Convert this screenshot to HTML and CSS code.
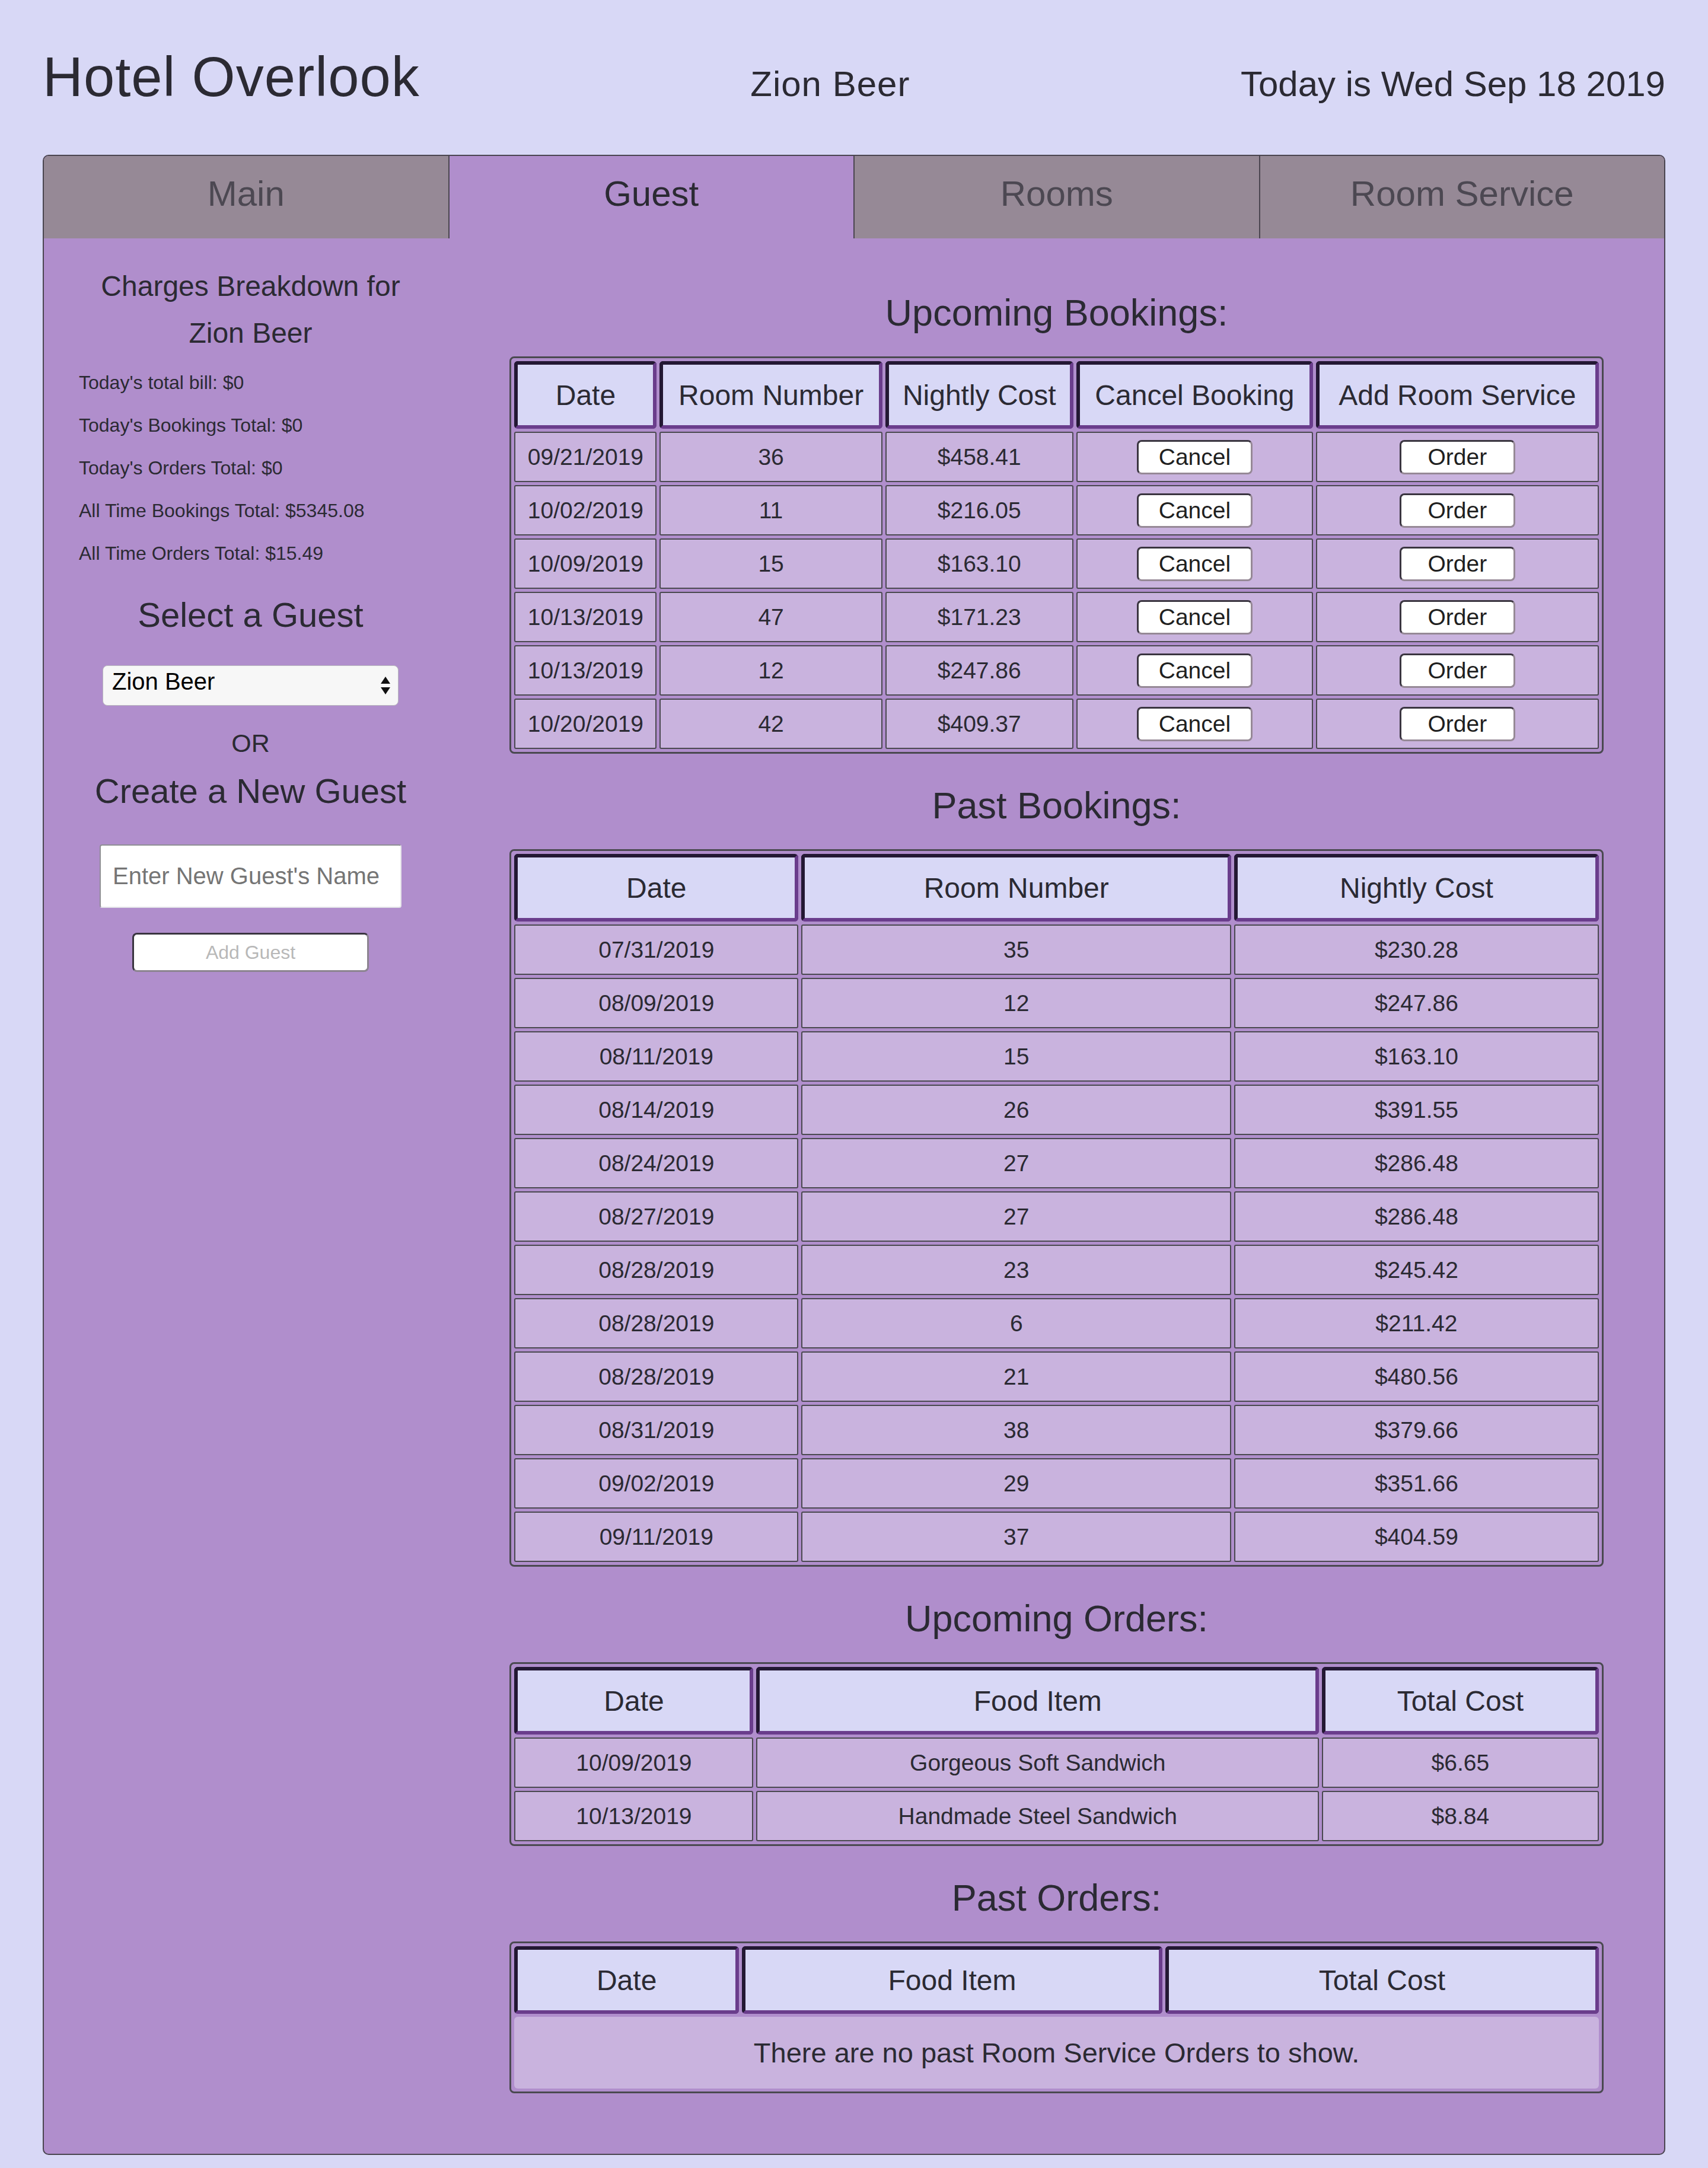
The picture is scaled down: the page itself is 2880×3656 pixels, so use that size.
FILE: index.html
```html
<!DOCTYPE html>
<html lang="en">
<head>
<meta charset="utf-8">
<title>Hotel Overlook</title>
<link rel="stylesheet" href="styles.css">
</head>
<body>
<header class="top">
  <h1 class="brand">Hotel Overlook</h1>
  <span class="top-name">Zion Beer</span>
  <span class="top-date">Today is Wed Sep 18 2019</span>
</header>

<div class="container">
  <nav class="tabs">
    <div class="tab">Main</div>
    <div class="tab active">Guest</div>
    <div class="tab">Rooms</div>
    <div class="tab">Room Service</div>
  </nav>

  <div class="panel">
    <aside class="sidebar">
      <h3 class="charges-title">Charges Breakdown for<br>Zion Beer</h3>
      <div class="stats">
        <p>Today's total bill: $0</p>
        <p>Today's Bookings Total: $0</p>
        <p>Today's Orders Total: $0</p>
        <p>All Time Bookings Total: $5345.08</p>
        <p>All Time Orders Total: $15.49</p>
      </div>
      <h3 class="side-heading select-heading">Select a Guest</h3>
      <div class="select-wrap">
        <select class="guest-select">
          <option>Zion Beer</option>
        </select>
        <svg class="select-arrows" width="20" height="36" viewBox="0 0 20 36">
          <polygon points="10,3 18,15 2,15" fill="#111"/>
          <polygon points="2,21 18,21 10,33" fill="#111"/>
        </svg>
      </div>
      <p class="or">OR</p>
      <h3 class="side-heading">Create a New Guest</h3>
      <input class="guest-input" type="text" placeholder="Enter New Guest's Name">
      <button class="add-btn" disabled>Add Guest</button>
    </aside>

    <main class="main">
      <h2>Upcoming Bookings:</h2>
      <table class="data">
        <tr class="head">
          <th class="w129">Date</th>
          <th class="w208">Room Number</th>
          <th class="w174">Nightly Cost</th>
          <th class="w222">Cancel Booking</th>
          <th class="w267">Add Room Service</th>
        </tr>
        <tr class="row"><td>09/21/2019</td><td>36</td><td>$458.41</td><td><button class="btn">Cancel</button></td><td><button class="btn">Order</button></td></tr>
        <tr class="row"><td>10/02/2019</td><td>11</td><td>$216.05</td><td><button class="btn">Cancel</button></td><td><button class="btn">Order</button></td></tr>
        <tr class="row"><td>10/09/2019</td><td>15</td><td>$163.10</td><td><button class="btn">Cancel</button></td><td><button class="btn">Order</button></td></tr>
        <tr class="row"><td>10/13/2019</td><td>47</td><td>$171.23</td><td><button class="btn">Cancel</button></td><td><button class="btn">Order</button></td></tr>
        <tr class="row"><td>10/13/2019</td><td>12</td><td>$247.86</td><td><button class="btn">Cancel</button></td><td><button class="btn">Order</button></td></tr>
        <tr class="row"><td>10/20/2019</td><td>42</td><td>$409.37</td><td><button class="btn">Cancel</button></td><td><button class="btn">Order</button></td></tr>
      </table>

      <h2>Past Bookings:</h2>
      <table class="data">
        <tr class="head">
          <th class="w261">Date</th>
          <th class="w401">Room Number</th>
          <th class="w338">Nightly Cost</th>
        </tr>
        <tr class="row"><td>07/31/2019</td><td>35</td><td>$230.28</td></tr>
        <tr class="row"><td>08/09/2019</td><td>12</td><td>$247.86</td></tr>
        <tr class="row"><td>08/11/2019</td><td>15</td><td>$163.10</td></tr>
        <tr class="row"><td>08/14/2019</td><td>26</td><td>$391.55</td></tr>
        <tr class="row"><td>08/24/2019</td><td>27</td><td>$286.48</td></tr>
        <tr class="row"><td>08/27/2019</td><td>27</td><td>$286.48</td></tr>
        <tr class="row"><td>08/28/2019</td><td>23</td><td>$245.42</td></tr>
        <tr class="row"><td>08/28/2019</td><td>6</td><td>$211.42</td></tr>
        <tr class="row"><td>08/28/2019</td><td>21</td><td>$480.56</td></tr>
        <tr class="row"><td>08/31/2019</td><td>38</td><td>$379.66</td></tr>
        <tr class="row"><td>09/02/2019</td><td>29</td><td>$351.66</td></tr>
        <tr class="row"><td>09/11/2019</td><td>37</td><td>$404.59</td></tr>
      </table>

      <h2>Upcoming Orders:</h2>
      <table class="data">
        <tr class="head">
          <th class="w218">Date</th>
          <th class="w528">Food Item</th>
          <th class="w254">Total Cost</th>
        </tr>
        <tr class="row"><td>10/09/2019</td><td>Gorgeous Soft Sandwich</td><td>$6.65</td></tr>
        <tr class="row"><td>10/13/2019</td><td>Handmade Steel Sandwich</td><td>$8.84</td></tr>
      </table>

      <h2>Past Orders:</h2>
      <table class="data">
        <tr class="head">
          <th class="w204">Date</th>
          <th class="w392">Food Item</th>
          <th class="w404">Total Cost</th>
        </tr>
        <tr class="empty-row"><td class="empty" colspan="3">There are no past Room Service Orders to show.</td></tr>
      </table>
    </main>
  </div>
</div>
</body>
</html>
```

FILE: styles.css
```css
html, body {
  margin: 0;
  padding: 0;
}

body {
  background: #d8d8f6;
  font-family: "Liberation Sans", Arial, sans-serif;
  color: #2b2a33;
}

/* Header */
.top {
  display: flex;
  justify-content: space-between;
  align-items: baseline;
  padding: 77px 72px 0;
  margin-bottom: 79px;
}

.brand {
  margin: 0;
  font-size: 94px;
  font-weight: normal;
  line-height: 105px;
  letter-spacing: 1px;
}

.top-name,
.top-date {
  font-size: 60px;
  line-height: 67px;
}

.top-name {
  letter-spacing: 1px;
}

/* Container + tabs */
.container {
  margin: 0 72px;
  border: 2px solid #4a4550;
  border-radius: 10px;
  background: #b08ecc;
  overflow: hidden;
}

.tabs {
  display: flex;
  height: 139px;
}

.tab {
  flex: 1;
  display: flex;
  align-items: center;
  justify-content: center;
  background: #968996;
  color: #4c4852;
  font-size: 60px;
  padding-bottom: 12px;
  box-sizing: border-box;
}

.tab + .tab {
  border-left: 2px solid #4a4550;
}

.tab.active {
  background: #b08ecc;
  color: #2b2a33;
}

.panel {
  display: flex;
  align-items: flex-start;
}

/* Sidebar */
.sidebar {
  width: 25%;
  flex: none;
  box-sizing: border-box;
  padding-left: 14px;
  display: flex;
  flex-direction: column;
  align-items: center;
}

.charges-title {
  margin: 41px 0 0;
  font-size: 48px;
  line-height: 79px;
  font-weight: normal;
  text-align: center;
}

.stats {
  align-self: stretch;
  padding-left: 45px;
  margin-top: 26px;
}

.stats p {
  margin: 0 0 35px;
  font-size: 32px;
  line-height: 37px;
}

.side-heading {
  margin: 0 0 57px;
  font-size: 58px;
  line-height: 67px;
  font-weight: normal;
  text-align: center;
}

.select-heading {
  margin: 16px 0 52px;
}

.select-wrap {
  position: relative;
  width: 499px;
  height: 68px;
}

.guest-select {
  -webkit-appearance: none;
  appearance: none;
  width: 100%;
  height: 100%;
  box-sizing: border-box;
  background: #f7f7f7;
  border: 1px solid #b9b9bd;
  border-radius: 8px;
  font-family: "Liberation Sans", Arial, sans-serif;
  font-size: 40px;
  color: #000;
  padding: 0 0 14px 15px;
}

.select-arrows {
  position: absolute;
  right: 12px;
  top: 16px;
  pointer-events: none;
}

.or {
  margin: 38px 0 22px;
  font-size: 43px;
  line-height: 50px;
}

.guest-input {
  width: 509px;
  height: 107px;
  box-sizing: border-box;
  border: 2px solid;
  border-color: #8f8f94 #e4e4e8 #e4e4e8 #8f8f94;
  border-radius: 4px;
  background: #fff;
  font-family: "Liberation Sans", Arial, sans-serif;
  font-size: 40px;
  padding: 0 14px 0 20px;
  color: #222;
}

.guest-input::placeholder {
  color: #757575;
}

.add-btn {
  margin-top: 42px;
  width: 399px;
  height: 66px;
  box-sizing: border-box;
  background: #fff;
  border: 3px solid;
  border-color: #3a3540 #8c8490 #8c8490 #3a3540;
  border-radius: 8px;
  font-family: "Liberation Sans", Arial, sans-serif;
  font-size: 32px;
  color: #b8b8b8;
  padding: 0;
}

/* Main column */
.main {
  flex: 1;
  padding-top: 89px;
  padding-bottom: 51px;
}

.main h2 {
  margin: 0 0 38px;
  font-size: 63px;
  line-height: 72px;
  font-weight: normal;
  text-align: center;
}

.data {
  width: 90%;
  margin: 0 auto 51px;
  table-layout: fixed;
  border-collapse: separate;
  border-spacing: 5px;
  border: 3px solid #4a4950;
  border-radius: 8px;
}

.data th {
  background: #d8d8f6;
  border: 6px solid;
  border-color: #231833 #6a3d8c #6a3d8c #231833;
  border-radius: 6px;
  font-size: 48px;
  font-weight: normal;
  padding: 0 4px;
  white-space: nowrap;
}

.head {
  height: 114px;
}

.row {
  height: 85px;
}

.data td {
  background: #c9b3de;
  border: 2px solid #4a4950;
  border-radius: 3px;
  font-size: 39px;
  text-align: center;
  padding: 0 6px;
}

.data td.empty {
  height: 121px;
  border: none;
  border-radius: 6px;
  font-size: 47px;
}

.btn {
  width: 195px;
  height: 58px;
  box-sizing: border-box;
  background: #fff;
  border: 3px solid;
  border-color: #3a3540 #968996 #968996 #3a3540;
  border-radius: 8px;
  font-family: "Liberation Sans", Arial, sans-serif;
  font-size: 39px;
  color: #1f1f1f;
  padding: 0;
  vertical-align: middle;
}

/* column widths */
.w129 { width: 12.9%; }
.w208 { width: 20.8%; }
.w174 { width: 17.4%; }
.w222 { width: 22.2%; }
.w267 { width: 26.7%; }
.w261 { width: 26.1%; }
.w401 { width: 40.1%; }
.w338 { width: 33.8%; }
.w218 { width: 21.8%; }
.w528 { width: 52.8%; }
.w254 { width: 25.4%; }
.w204 { width: 20.4%; }
.w392 { width: 39.2%; }
.w404 { width: 40.4%; }
```
